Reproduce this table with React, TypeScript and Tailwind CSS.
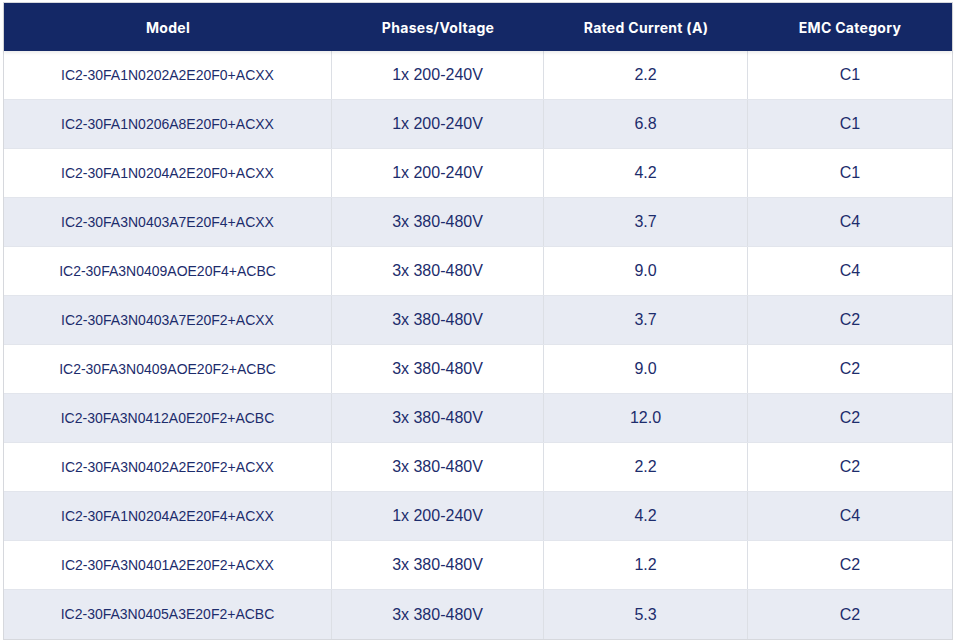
const rows: [string, string, string, string][] = [
  ['IC2-30FA1N0202A2E20F0+ACXX', '1x 200-240V', '2.2', 'C1'],
  ['IC2-30FA1N0206A8E20F0+ACXX', '1x 200-240V', '6.8', 'C1'],
  ['IC2-30FA1N0204A2E20F0+ACXX', '1x 200-240V', '4.2', 'C1'],
  ['IC2-30FA3N0403A7E20F4+ACXX', '3x 380-480V', '3.7', 'C4'],
  ['IC2-30FA3N0409AOE20F4+ACBC', '3x 380-480V', '9.0', 'C4'],
  ['IC2-30FA3N0403A7E20F2+ACXX', '3x 380-480V', '3.7', 'C2'],
  ['IC2-30FA3N0409AOE20F2+ACBC', '3x 380-480V', '9.0', 'C2'],
  ['IC2-30FA3N0412A0E20F2+ACBC', '3x 380-480V', '12.0', 'C2'],
  ['IC2-30FA3N0402A2E20F2+ACXX', '3x 380-480V', '2.2', 'C2'],
  ['IC2-30FA1N0204A2E20F4+ACXX', '1x 200-240V', '4.2', 'C4'],
  ['IC2-30FA3N0401A2E20F2+ACXX', '3x 380-480V', '1.2', 'C2'],
  ['IC2-30FA3N0405A3E20F2+ACBC', '3x 380-480V', '5.3', 'C2'],
];

const headers = ['Model', 'Phases/Voltage', 'Rated Current (A)', 'EMC Category'];
const cols = 'grid grid-cols-[328px_212px_204px_1fr]';

const App = () => {
  return (
    <div className="w-[955px] h-[642px] bg-white pt-[2px] pl-[3px] pr-[2px]">
      <div className="w-[950px] border border-[#d6d8dd] bg-white">
        <div className={`${cols} h-[48px] bg-[#142866] shadow-[0_2px_3px_rgba(0,0,0,0.08)] relative`}>
          {headers.map(h => (
            <div
              key={h}
              className="flex items-center justify-center text-white text-[14px] font-bold tracking-[0.3px] font-['Inter',sans-serif] pt-[1px]"
            >
              {h}
            </div>
          ))}
        </div>
        {rows.map((r, i) => (
          <div
            key={i}
            className={`${cols} h-[49px] ${i % 2 === 1 ? 'bg-[#e8ebf3]' : 'bg-white'} ${i < rows.length - 1 ? 'border-b border-[#e2e5ec]' : ''} text-[#1c2c6c] font-['Liberation_Sans',Arial,sans-serif]`}
          >
            <div className="flex items-center justify-center text-[14px] border-r border-[#dcdfe5]">{r[0]}</div>
            <div className="flex items-center justify-center text-[16px] border-r border-[#dcdfe5]">{r[1]}</div>
            <div className="flex items-center justify-center text-[16px] border-r border-[#dcdfe5]">{r[2]}</div>
            <div className="flex items-center justify-center text-[16px]">{r[3]}</div>
          </div>
        ))}
      </div>
    </div>
  );
};

export default App;
